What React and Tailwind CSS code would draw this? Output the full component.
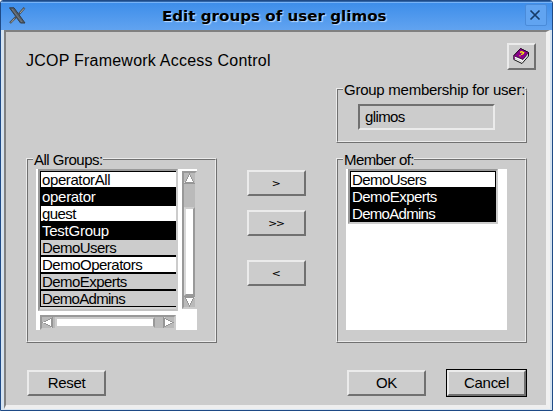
import React from "react";

const bevel = "border-2 border-t-[#ebebeb] border-l-[#ebebeb] border-r-[#707070] border-b-[#707070]";
const sunken = "border-2 border-t-[#707070] border-l-[#707070] border-r-[#ebebeb] border-b-[#ebebeb]";

function Button({ children, className = "" }) {
  return (
    <button className={`flex h-[26px] items-center justify-center bg-[#ccc] ${bevel} ${className}`}>
      {children}
    </button>
  );
}

function MoveButton({ glyph, className = "" }) {
  return (
    <Button className={`w-[59px] font-['DejaVu_Sans_Mono',monospace] text-[11px] leading-none ${className}`}>
      <span className="scale-x-120">{glyph}</span>
    </Button>
  );
}

function GroupBox({ title, titleClass, className = "", children }) {
  return (
    <div className={`w-[191px] border border-t-[#ebebeb] border-l-[#ebebeb] border-r-[#707070] border-b-[#707070] ${className}`}>
      <div className="h-full border border-t-[#707070] border-l-[#707070] border-r-[#ebebeb] border-b-[#ebebeb]">
        <div className="-mt-[8px] mb-px ml-[5px] flex h-[16px]">
          <span className={`bg-[#ccc] pl-px text-[15px] leading-[16px] whitespace-nowrap ${titleClass}`}>{title}</span>
        </div>
        {children}
      </div>
    </div>
  );
}

const tones = {
  white: "bg-white text-black",
  black: "bg-black text-white",
  gray: "bg-[#ccc] text-black",
};

function Row({ label, tone, spacing, closed }) {
  return (
    <div className={`h-[17px] border-y border-l border-black pl-px text-[15px] leading-[15px] whitespace-nowrap ${closed ? "border-r" : ""} ${tones[tone]} ${spacing}`}>
      {label}
    </div>
  );
}

function Arrow({ className = "" }) {
  return (
    <svg className={`shrink-0 ${className}`} width="11" height="11" viewBox="0 0 11 11" shapeRendering="crispEdges">
      <rect width="11" height="11" fill="#bababa" />
      <path d="M5.5 0L11 11H0Z" fill="#969696" />
      <path d="M5.5 0L1 9H0V11L5 1Z" fill="#ddd" />
      <path d="M5.5 1.500L9 9H2Z" fill="#fff" />
    </svg>
  );
}

function HelpBook() {
  return (
    <svg width="17" height="17" viewBox="0 0 17 17">
      <path d="M7.500 .5L15.500 4.500V8L9 15.500L.8 11.500V7.500Z" fill="#fff" stroke="#111" strokeWidth="1" />
      <path d="M7.500 .5L15.500 4.500L10 11.500L1 7.800Z" fill="#8b008b" stroke="#2a002a" strokeWidth=".8" />
      <path d="M2 10.200L8.900 13.600L15 7" stroke="#b5b5b5" strokeWidth=".7" fill="none" />
      <path d="M1 7.500L1.500 11.500" stroke="#8b008b" fill="none" />
      <path d="M7 4.400L8.800 3.700L10.700 4.700L9.700 6L8 6.300M6.500 7.500L7.500 8" stroke="#ff0" strokeWidth="1.200" fill="none" />
    </svg>
  );
}

const allGroups = [
  ["operatorAll", "white", "tracking-[-0.4px]"],
  ["operator", "black", "tracking-[-0.3px]"],
  ["guest", "white", "tracking-[-0.6px]"],
  ["TestGroup", "black", "tracking-[-0.25px]"],
  ["DemoUsers", "gray", "tracking-[-0.55px]"],
  ["DemoOperators", "white", "tracking-[-0.5px]"],
  ["DemoExperts", "gray", "tracking-[-0.55px]"],
  ["DemoAdmins", "gray", "tracking-[-0.7px]"],
];

const memberOf = [
  ["DemoUsers", "white", "tracking-[-0.55px]"],
  ["DemoExperts", "black", "tracking-[-0.55px]"],
  ["DemoAdmins", "black", "tracking-[-0.7px]"],
];

function AllGroupsList() {
  return (
    <div className="h-[161px] w-[161px] bg-white pl-[2px]">
      <div className="flex h-[142px]">
        <div className="h-[142px] w-[140px] shrink-0 border-2 border-t-[#999] border-l-[#999] border-r-[#ccc] border-b-[#c3c3c3] bg-[#d4d4d4]">
          {allGroups.map(([label, tone, spacing]) => (
            <Row key={label} label={label} tone={tone} spacing={spacing} />
          ))}
        </div>
        <div className="mt-[2px] ml-[4px] flex h-[138px] w-[15px] flex-col border-2 border-t-[#999] border-l-[#999] border-r-[#ccc] border-b-[#ccc] bg-[#bababa]">
          <Arrow />
          <div className="mt-[23px] h-[89px] w-[11px] border-2 border-t-[#ccc] border-l-[#d8d8d8] border-r-[#999] border-b-[#999] bg-white" />
          <Arrow className="rotate-180" />
        </div>
      </div>
      <div className="mt-[4px] ml-[2px] flex h-[15px] w-[136px] border-2 border-t-[#999] border-l-[#999] border-r-[#ccc] border-b-[#ccc] bg-[#bababa]">
        <Arrow className="-rotate-90" />
        <div className="ml-[2px] h-[11px] w-[100px] border-2 border-t-[#ccc] border-l-[#ccc] border-r-[#999] border-b-[#ccc] bg-white" />
        <Arrow className="ml-auto rotate-90" />
      </div>
    </div>
  );
}

function TitleBar() {
  return (
    <div className="flex h-[27px] items-start justify-between bg-linear-to-b from-[#3d8eea] to-[#61a3f0] pt-px pr-[5px] pl-[8px]">
      <svg className="mt-[3px]" width="17" height="17" viewBox="0 0 17 17" fill="none">
        <path d="M.5 .8H5L16 16H11.500Z" fill="#545d67" stroke="#333d48" strokeWidth="1" />
        <path d="M3 2L13 15" stroke="#747c84" />
        <path d="M15.500 .8L9.500 7.500M7 10L1 16" stroke="#47515c" strokeWidth="2.400" />
        <path d="M15 1.500L11 6M5.500 11.500L2 15.500" stroke="#b3b0a2" strokeWidth=".9" />
      </svg>
      <h1 className="mt-[6px] -translate-x-px scale-x-112 font-['DejaVu_Sans',sans-serif] text-[13.5px] leading-none font-bold whitespace-nowrap text-black [text-shadow:1px_1px_1px_#bfdcff]">
        Edit groups of user glimos
      </h1>
      <div className="flex size-[22px] items-center justify-center rounded-[2px] border border-[#4a8bd9] bg-[#61a4f1]">
        <svg className="-translate-x-px" width="12" height="12" viewBox="0 0 12 12" fill="none">
          <path d="M1.500 1.500L10.500 10.500M10.500 1.500L1.500 10.500" stroke="#163b68" strokeWidth="1.700" />
        </svg>
      </div>
    </div>
  );
}

export default function App() {
  return (
    <div className="h-[411px] w-[553px] overflow-hidden rounded-t-[3px] border border-[#1e4a86] bg-[#d5e3f0] font-['Liberation_Sans',Arial,sans-serif] text-black">
      <div className="h-px bg-[#3166a8]" />
      <div className="h-px bg-[#77b3f7]" />
      <TitleBar />
      <div className="mr-[2px] ml-[3px] h-[379px] border-t-2 border-r-4 border-b-4 border-l-2 border-t-[#808080] border-r-[#f0f0f0] border-b-[#eee] border-l-[#808080] bg-[#ccc] pr-[10px] pl-[20px]">
        <div className="flex h-[56px] justify-between">
          <h2 className="mt-[20px] text-[16px] leading-[18px] tracking-[0.23px] whitespace-nowrap">JCOP Framework Access Control</h2>
          <div className={`mt-[11px] flex h-[27px] w-[29px] items-center justify-center bg-[#ccc] pr-px ${bevel}`}>
            <HelpBook />
          </div>
        </div>
        <div className="flex h-[255px]">
          <GroupBox title="All Groups:" titleClass="tracking-[-0.5px]" className="mt-[70px] h-[185px]">
            <div className="ml-[8px]">
              <AllGroupsList />
            </div>
          </GroupBox>
          <div className="ml-[30px] w-[59px] pt-[82px]">
            <MoveButton glyph=">" />
            <MoveButton glyph=">>" className="mt-[14px]" />
            <MoveButton glyph="<" className="mt-[24px]" />
          </div>
          <div className="ml-[30px] w-[191px]">
            <GroupBox title="Group membership for user:" titleClass="tracking-[-0.25px]" className="h-[55px]">
              <div className={`mt-[6px] ml-[20px] h-[26px] w-[137px] bg-[#ccc] pl-[5px] text-[15px] leading-[21px] tracking-[-0.6px] ${sunken}`}>
                glimos
              </div>
            </GroupBox>
            <GroupBox title="Member of:" titleClass="tracking-[-0.6px]" className="mt-[15px] h-[185px]">
              <div className="ml-[8px] h-[161px] w-[161px] bg-white pl-[2px]">
                <div className="h-[55px] w-[150px] border-2 border-t-[#999] border-l-[#999] border-r-[#ccc] border-b-[#ccc]">
                  {memberOf.map(([label, tone, spacing]) => (
                    <Row key={label} label={label} tone={tone} spacing={spacing} closed />
                  ))}
                </div>
              </div>
            </GroupBox>
          </div>
        </div>
        <div className="mt-[26px] flex h-[28px] items-center pl-px text-[15px] tracking-[-0.3px]">
          <Button className="w-[79px]">Reset</Button>
          <Button className="ml-[241px] w-[79px]">OK</Button>
          <div className="ml-[20px] border border-black">
            <Button className="w-[79px]">Cancel</Button>
          </div>
        </div>
      </div>
    </div>
  );
}
